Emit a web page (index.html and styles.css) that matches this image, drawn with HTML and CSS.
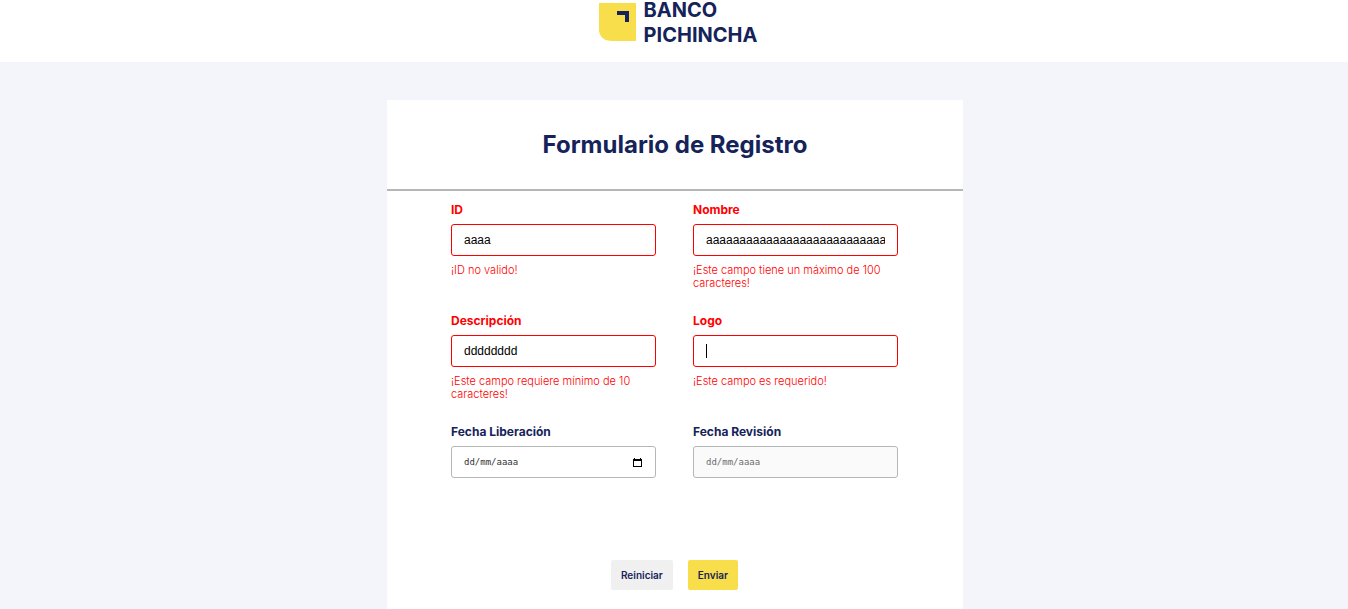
FILE: index.html
```html
<!DOCTYPE html>
<html lang="es">
<head>
<meta charset="utf-8">
<meta name="viewport" content="width=device-width, initial-scale=1">
<title>Banco Pichincha - Formulario de Registro</title>
<link rel="stylesheet" href="styles.css">
</head>
<body>
<header class="header">
  <svg class="logo" viewBox="0 0 37 38" aria-hidden="true">
    <path fill="#f8de4a" d="M0 0H37V38H12Q0 37 0 26Z"/>
    <path fill="#15235a" d="M18 8H30V19H26V12H18Z"/>
  </svg>
  <span class="brand">BANCO<br>PICHINCHA</span>
</header>
<main class="page">
  <section class="card">
    <h1 class="title">Formulario de Registro</h1>
    <form class="form" novalidate>
      <div class="grid">
        <div class="field invalid">
          <label class="label" for="id">ID</label>
          <input class="input" id="id" type="text" value="aaaa">
          <p class="error">¡ID no valido!</p>
        </div>
        <div class="field invalid">
          <label class="label" for="nombre">Nombre</label>
          <input class="input" id="nombre" type="text" value="aaaaaaaaaaaaaaaaaaaaaaaaaaa">
          <p class="error">¡Este campo tiene un máximo de 100 caracteres!</p>
        </div>
        <div class="field invalid">
          <label class="label" for="descripcion">Descripción</label>
          <input class="input" id="descripcion" type="text" value="dddddddd">
          <p class="error">¡Este campo requiere mínimo de 10 caracteres!</p>
        </div>
        <div class="field invalid">
          <label class="label" for="logo">Logo</label>
          <div class="control">
            <input class="input" id="logo" type="text" autofocus>
            <span class="caret"></span>
          </div>
          <p class="error">¡Este campo es requerido!</p>
        </div>
        <div class="field">
          <label class="label" for="liberacion">Fecha Liberación</label>
          <div class="control">
            <input class="input date" id="liberacion" type="text" placeholder="dd/mm/aaaa">
            <button class="picker" type="button" aria-label="Abrir calendario">
              <svg class="calendar" viewBox="0 0 9 9" aria-hidden="true">
                <path fill="#000" fill-rule="evenodd" d="M0 1H1V0H2V1H7V0H8V1H9V9H0ZM1 3V8H8V3Z"/>
              </svg>
            </button>
          </div>
        </div>
        <div class="field">
          <label class="label" for="revision">Fecha Revisión</label>
          <input class="input date" id="revision" type="text" placeholder="dd/mm/aaaa" disabled>
        </div>
      </div>
      <div class="actions">
        <button class="button" type="reset">Reiniciar</button>
        <button class="button primary" type="submit">Enviar</button>
      </div>
    </form>
  </section>
</main>
</body>
</html>
```
FILE: styles.css
```css
* {
  box-sizing: border-box;
}

body {
  margin: 0;
  background: #f4f5fa;
  color: #15235a;
  font-family: Inter, "Liberation Sans", sans-serif;
}

.header {
  display: flex;
  justify-content: center;
  align-items: flex-start;
  gap: 8px;
  padding: 0 0 14px 8px;
  background: #fff;
}

.logo {
  width: 37px;
  height: 38px;
  margin-top: 3px;
}

.brand {
  margin-top: -2px;
  font-size: 20px;
  font-weight: 700;
  line-height: 25px;
}

.page {
  padding: 38px 0 0 2px;
}

.card {
  max-width: 576px;
  margin: 0 auto;
  background: #fff;
}

.title {
  margin: 0;
  padding: 29px 0;
  border-bottom: 2px solid #b5b7b7;
  font-size: 24px;
  font-weight: 700;
  line-height: 31px;
  text-align: center;
}

.form {
  padding: 11px 65px 38px 64px;
}

.grid {
  display: grid;
  grid-template-columns: 1fr 1fr;
  grid-auto-rows: minmax(111px, auto);
  column-gap: 37px;
}

.label {
  display: block;
  margin-bottom: 7px;
  font-size: 12px;
  font-weight: 700;
  line-height: 15px;
}

.control {
  position: relative;
}

.input {
  display: block;
  width: 100%;
  height: 32px;
  padding: 0 12px;
  border: 1px solid #b5b7b7;
  border-radius: 3px;
  outline: 0;
  background: #fff;
  color: #000;
  font-family: "Liberation Sans", Arial, sans-serif;
  font-size: 12px;
}

.date {
  font-family: "DejaVu Sans Mono", monospace;
  font-size: 9px;
}

.date::placeholder {
  color: #333;
}

.date:disabled {
  background: #fafafa;
}

.date:disabled::placeholder {
  color: #6d6d6d;
}

.invalid .label,
.error {
  color: #f00;
}

.invalid .input {
  border-color: #f00;
  caret-color: transparent;
}

.error {
  margin: 8px 0 0;
  font-size: 11px;
  font-weight: 300;
  line-height: 13px;
}

.caret {
  position: absolute;
  top: 9px;
  left: 13px;
  width: 1px;
  height: 14px;
  background: #000;
}

.picker {
  position: absolute;
  top: 8px;
  right: 11px;
  display: flex;
  align-items: center;
  justify-content: center;
  width: 16px;
  height: 16px;
  padding: 0;
  border: 0;
  background: none;
}

.calendar {
  width: 9px;
  height: 9px;
}

.actions {
  display: flex;
  justify-content: center;
  gap: 15px;
  margin-top: 25px;
}

.button {
  height: 30px;
  padding: 0 10px;
  border: 0;
  border-radius: 2px;
  background: #f0f0f0;
  color: #15235a;
  font-family: inherit;
  font-size: 10px;
  font-weight: 600;
}

.primary {
  background: #f8de4a;
}
```
